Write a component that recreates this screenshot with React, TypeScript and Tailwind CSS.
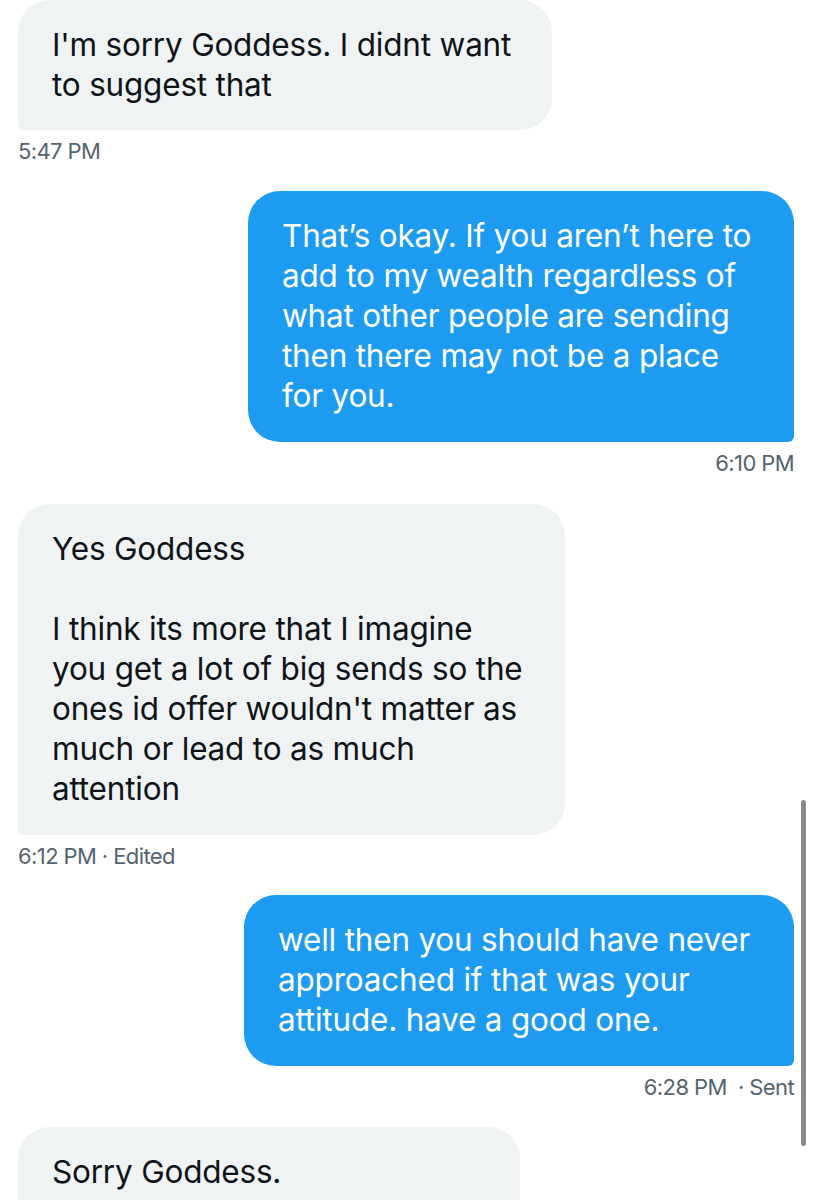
import clsx from 'clsx';

const cn = clsx;

type Msg = {
  id: number;
  side: 'in' | 'out';
  lines: string[];
  width: string;
  meta?: string;
  wrap: string;
  pad: string;
};

const messages: Msg[] = [
  {
    id: 1,
    side: 'in',
    lines: ["I'm sorry Goddess. I didnt want", 'to suggest that'],
    width: 'w-[534px]',
    meta: '5:47 PM',
    wrap: 'mt-0',
    pad: 'pb-[25px]',
  },
  {
    id: 2,
    side: 'out',
    lines: [
      'That’s okay. If you aren’t here to',
      'add to my wealth regardless of',
      'what other people are sending',
      'then there may not be a place',
      'for you.',
    ],
    width: 'w-[546px]',
    meta: '6:10 PM',
    wrap: 'mt-[28px]',
    pad: 'pb-[26px]',
  },
  {
    id: 3,
    side: 'in',
    lines: [
      'Yes Goddess',
      '',
      'I think its more that I imagine',
      'you get a lot of big sends so the',
      "ones id offer wouldn't matter as",
      'much or lead to as much',
      'attention',
    ],
    width: 'w-[547px]',
    meta: '6:12 PM · Edited',
    wrap: 'mt-[29px]',
    pad: 'pb-[26px]',
  },
  {
    id: 4,
    side: 'out',
    lines: [
      'well then you should have never',
      'approached if that was your',
      'attitude. have a good one.',
    ],
    width: 'w-[550px]',
    meta: '6:28 PM  · Sent',
    wrap: 'mt-[27px]',
    pad: 'pb-[26px]',
  },
  {
    id: 5,
    side: 'in',
    lines: ['Sorry Goddess.', '', ''],
    width: 'w-[502px]',
    wrap: 'mt-[28px]',
    pad: 'pb-[26px]',
  },
];

function Bubble({ msg }: { msg: Msg }) {
  const out = msg.side === 'out';
  return (
    <div className={cn('flex flex-col', out ? 'items-end' : 'items-start', msg.wrap)}>
      <div
        className={cn(
          msg.width,
          msg.pad,
          'pt-[25px] text-[31.5px] leading-[40px] tracking-[-0.2px]',
          out
            ? 'bg-[#1d9bf0] text-white rounded-[32px] rounded-br-[6px] pl-[34px] pr-2'
            : 'bg-[#eff3f4] text-[#0f1419] rounded-[32px] rounded-bl-[6px] pl-[34px] pr-2'
        )}
      >
        {msg.lines.map((l, i) => (
          <div key={i} className="whitespace-pre h-[40px]">
            {l}
          </div>
        ))}
      </div>
      {msg.meta && (
        <div className="mt-[9px] h-[24px] text-[22px] leading-[24px] text-[#536471] whitespace-pre tracking-[-0.6px]">
          {msg.meta}
        </div>
      )}
    </div>
  );
}

export default function App() {
  return (
    <div className="relative h-[1200px] w-[813px] overflow-hidden bg-white font-['Inter','Noto_Sans',sans-serif]">
      <div className="flex flex-col pl-[18px] pr-[19px]">
        {messages.map((m) => (
          <Bubble key={m.id} msg={m} />
        ))}
      </div>
      {/* scroll indicator */}
      <div className="absolute left-[801px] top-[800px] h-[346px] w-[5px] rounded-full bg-[#8a8a8a]" />
    </div>
  );
}
